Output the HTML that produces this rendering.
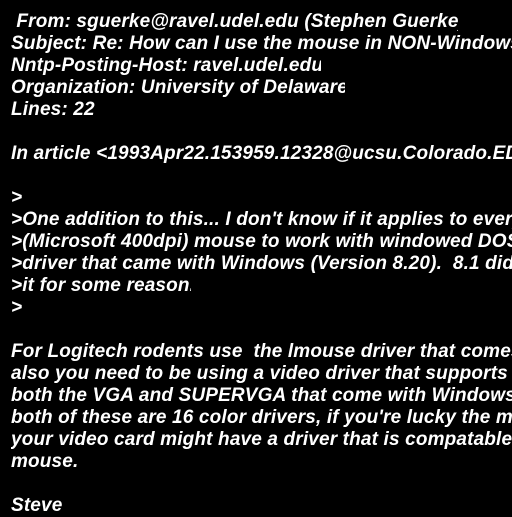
<!DOCTYPE html>
<html><head><style>
html,body{margin:0;padding:0;background:#000;width:512px;height:512px;overflow:hidden}
#t{position:absolute;left:11px;top:11px;width:520px;font-family:"Liberation Sans",Arial,sans-serif;font-weight:bold;font-style:italic;font-size:19px;letter-spacing:0.15px;line-height:22px;color:#fff}
.l{height:22px;overflow:hidden;white-space:pre}
.c{display:inline-block;overflow:hidden;vertical-align:top;height:22px}
</style></head><body><div id="t"><div class="l"><span class="c" style="width:447px"> From: sguerke@ravel.udel.edu (Stephen Guerke)</span></div><div class="l">Subject: Re: How can I use the mouse in NON-Windows applications</div><div class="l"><span class="c" style="width:310px">Nntp-Posting-Host: ravel.udel.edu</span></div><div class="l"><span class="c" style="width:334px">Organization: University of Delaware</span></div><div class="l">Lines: 22</div><div class="l"> </div><div class="l">In article &lt;1993Apr22.153959.12328@ucsu.Colorado.EDU&gt; writes:</div><div class="l"> </div><div class="l">&gt;</div><div class="l">&gt;One addition to this... I don't know if it applies to everyone</div><div class="l">&gt;(Microsoft 400dpi) mouse to work with windowed DOS apps</div><div class="l">&gt;driver that came with Windows (Version 8.20).  8.1 didn't do</div><div class="l"><span class="c" style="width:180px">&gt;it for some reason.</span></div><div class="l">&gt;</div><div class="l"> </div><div class="l">For Logitech rodents use  the lmouse driver that comes with</div><div class="l">also you need to be using a video driver that supports the</div><div class="l">both the VGA and SUPERVGA that come with Windows work</div><div class="l">both of these are 16 color drivers, if you're lucky the maker of</div><div class="l">your video card might have a driver that is compatable with the</div><div class="l">mouse.</div><div class="l"> </div><div class="l">Steve</div></div></body></html>
